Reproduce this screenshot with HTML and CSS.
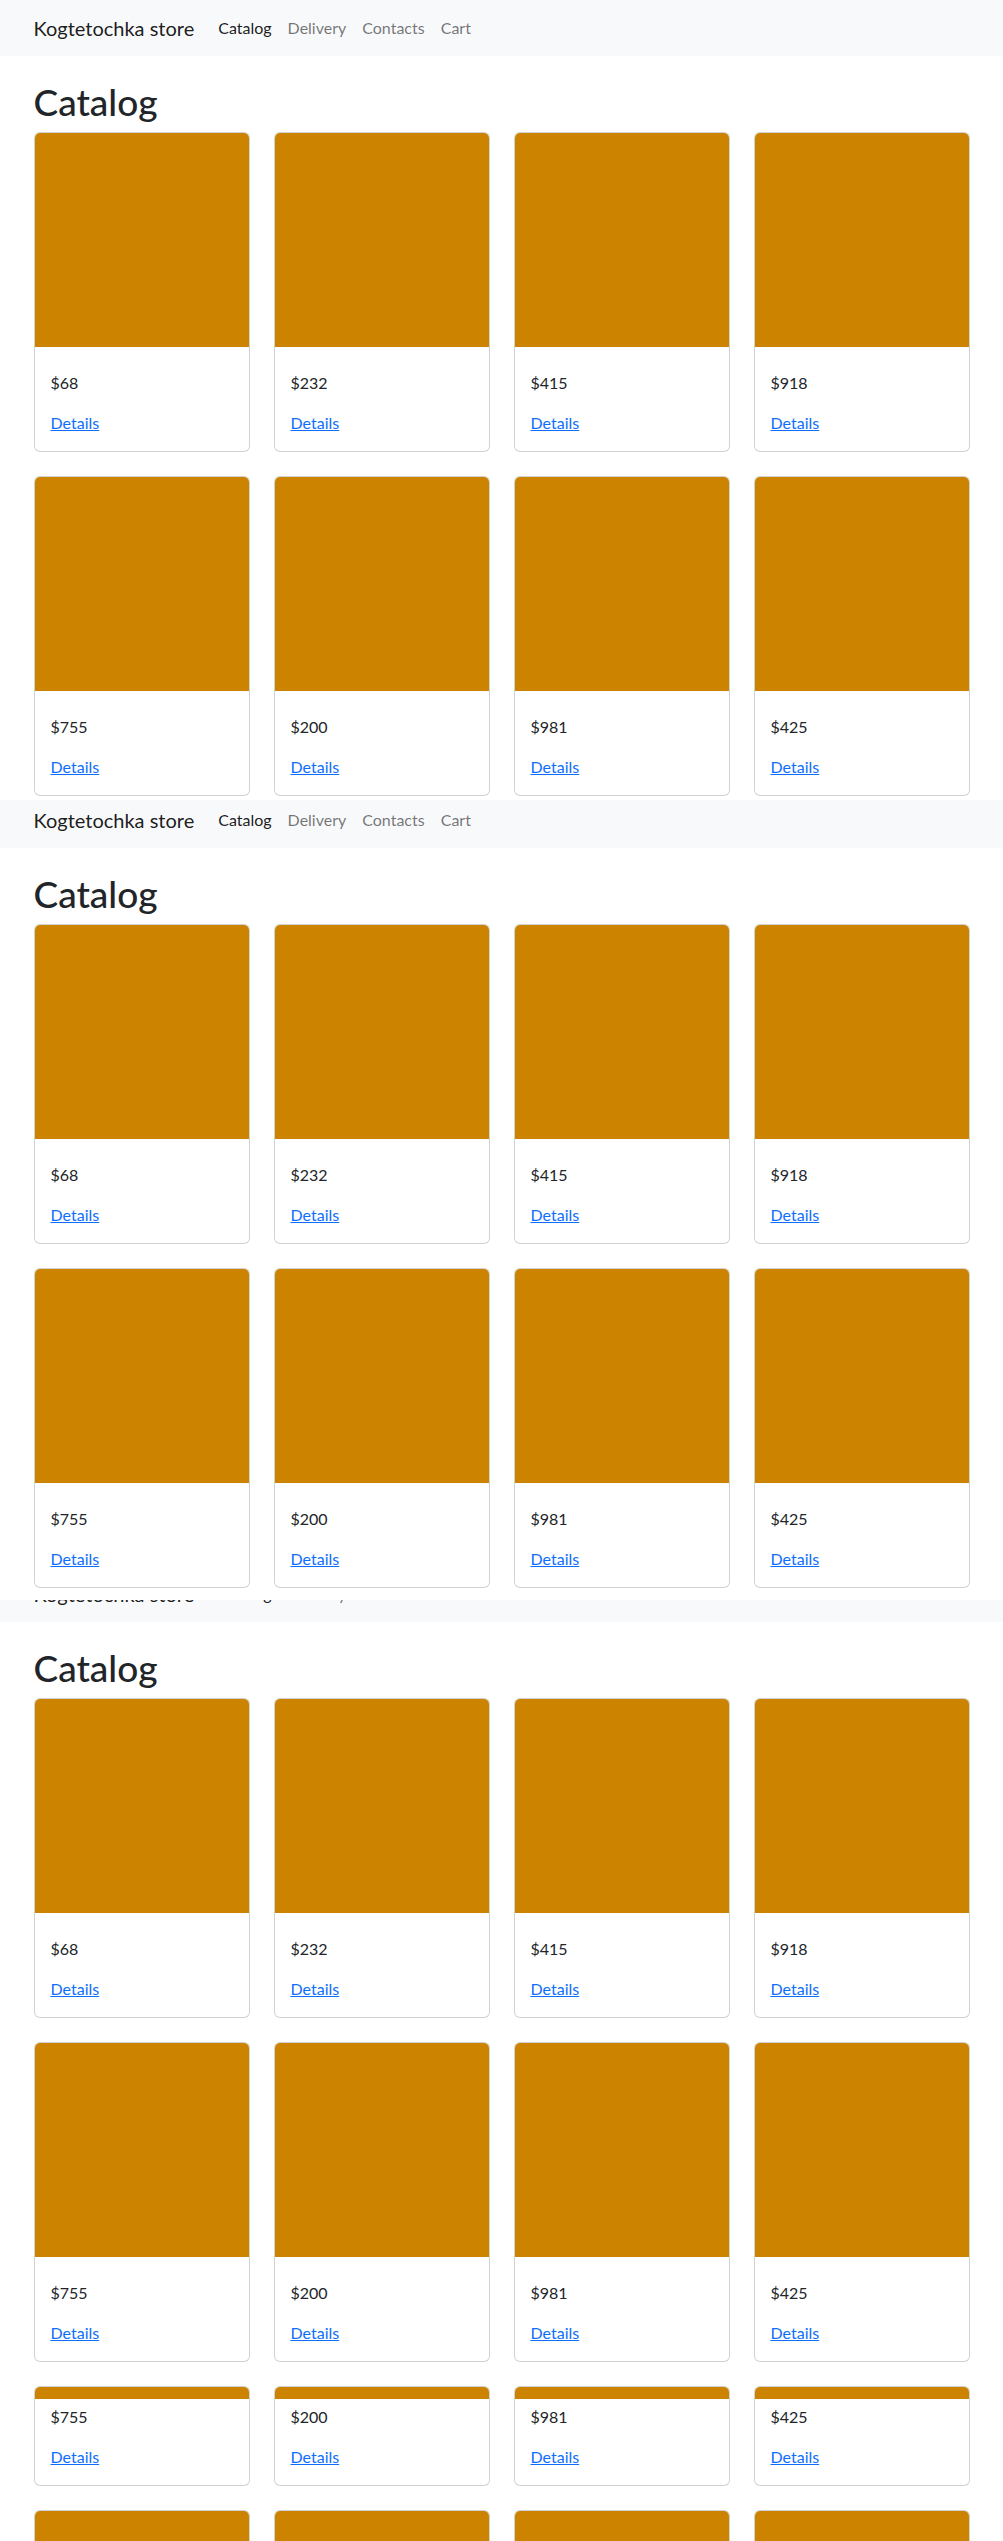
FILE: index.html
```html
<!DOCTYPE html>
<html lang="en">
<head>
<meta charset="utf-8">
<title>Kogtetochka store</title>
<link rel="stylesheet" href="styles.css">
</head>
<body>

<!-- capture 1 -->
<div class="shot shot-a">
  <div class="page">
    <nav class="navbar">
      <div class="container nav-inner">
        <a class="brand" href="#">Kogtetochka store</a>
        <ul class="nav">
          <li><a class="nav-link active" href="#">Catalog</a></li>
          <li><a class="nav-link" href="#">Delivery</a></li>
          <li><a class="nav-link" href="#">Contacts</a></li>
          <li><a class="nav-link" href="#">Cart</a></li>
        </ul>
      </div>
    </nav>
    <main class="container main">
      <h1 class="heading">Catalog</h1>
      <div class="grid">
        <div class="card"><div class="card-img"></div><div class="card-body"><h5 class="card-title"></h5><p class="price">$68</p><a class="details" href="#">Details</a></div></div>
        <div class="card"><div class="card-img"></div><div class="card-body"><h5 class="card-title"></h5><p class="price">$232</p><a class="details" href="#">Details</a></div></div>
        <div class="card"><div class="card-img"></div><div class="card-body"><h5 class="card-title"></h5><p class="price">$415</p><a class="details" href="#">Details</a></div></div>
        <div class="card"><div class="card-img"></div><div class="card-body"><h5 class="card-title"></h5><p class="price">$918</p><a class="details" href="#">Details</a></div></div>
        <div class="card"><div class="card-img"></div><div class="card-body"><h5 class="card-title"></h5><p class="price">$755</p><a class="details" href="#">Details</a></div></div>
        <div class="card"><div class="card-img"></div><div class="card-body"><h5 class="card-title"></h5><p class="price">$200</p><a class="details" href="#">Details</a></div></div>
        <div class="card"><div class="card-img"></div><div class="card-body"><h5 class="card-title"></h5><p class="price">$981</p><a class="details" href="#">Details</a></div></div>
        <div class="card"><div class="card-img"></div><div class="card-body"><h5 class="card-title"></h5><p class="price">$425</p><a class="details" href="#">Details</a></div></div>
      </div>
    </main>
  </div>
</div>

<!-- capture 2 -->
<div class="shot shot-b">
  <div class="page">
    <nav class="navbar">
      <div class="container nav-inner">
        <a class="brand" href="#">Kogtetochka store</a>
        <ul class="nav">
          <li><a class="nav-link active" href="#">Catalog</a></li>
          <li><a class="nav-link" href="#">Delivery</a></li>
          <li><a class="nav-link" href="#">Contacts</a></li>
          <li><a class="nav-link" href="#">Cart</a></li>
        </ul>
      </div>
    </nav>
    <main class="container main">
      <h1 class="heading">Catalog</h1>
      <div class="grid">
        <div class="card"><div class="card-img"></div><div class="card-body"><h5 class="card-title"></h5><p class="price">$68</p><a class="details" href="#">Details</a></div></div>
        <div class="card"><div class="card-img"></div><div class="card-body"><h5 class="card-title"></h5><p class="price">$232</p><a class="details" href="#">Details</a></div></div>
        <div class="card"><div class="card-img"></div><div class="card-body"><h5 class="card-title"></h5><p class="price">$415</p><a class="details" href="#">Details</a></div></div>
        <div class="card"><div class="card-img"></div><div class="card-body"><h5 class="card-title"></h5><p class="price">$918</p><a class="details" href="#">Details</a></div></div>
        <div class="card"><div class="card-img"></div><div class="card-body"><h5 class="card-title"></h5><p class="price">$755</p><a class="details" href="#">Details</a></div></div>
        <div class="card"><div class="card-img"></div><div class="card-body"><h5 class="card-title"></h5><p class="price">$200</p><a class="details" href="#">Details</a></div></div>
        <div class="card"><div class="card-img"></div><div class="card-body"><h5 class="card-title"></h5><p class="price">$981</p><a class="details" href="#">Details</a></div></div>
        <div class="card"><div class="card-img"></div><div class="card-body"><h5 class="card-title"></h5><p class="price">$425</p><a class="details" href="#">Details</a></div></div>
      </div>
    </main>
  </div>
</div>

<!-- capture 3 -->
<div class="shot shot-c">
  <div class="page">
    <nav class="navbar">
      <div class="container nav-inner">
        <a class="brand" href="#">Kogtetochka store</a>
        <ul class="nav">
          <li><a class="nav-link active" href="#">Catalog</a></li>
          <li><a class="nav-link" href="#">Delivery</a></li>
          <li><a class="nav-link" href="#">Contacts</a></li>
          <li><a class="nav-link" href="#">Cart</a></li>
        </ul>
      </div>
    </nav>
    <main class="container main">
      <h1 class="heading">Catalog</h1>
      <div class="grid">
        <div class="card"><div class="card-img"></div><div class="card-body"><h5 class="card-title"></h5><p class="price">$68</p><a class="details" href="#">Details</a></div></div>
        <div class="card"><div class="card-img"></div><div class="card-body"><h5 class="card-title"></h5><p class="price">$232</p><a class="details" href="#">Details</a></div></div>
        <div class="card"><div class="card-img"></div><div class="card-body"><h5 class="card-title"></h5><p class="price">$415</p><a class="details" href="#">Details</a></div></div>
        <div class="card"><div class="card-img"></div><div class="card-body"><h5 class="card-title"></h5><p class="price">$918</p><a class="details" href="#">Details</a></div></div>
        <div class="card"><div class="card-img"></div><div class="card-body"><h5 class="card-title"></h5><p class="price">$755</p><a class="details" href="#">Details</a></div></div>
        <div class="card"><div class="card-img"></div><div class="card-body"><h5 class="card-title"></h5><p class="price">$200</p><a class="details" href="#">Details</a></div></div>
        <div class="card"><div class="card-img"></div><div class="card-body"><h5 class="card-title"></h5><p class="price">$981</p><a class="details" href="#">Details</a></div></div>
        <div class="card"><div class="card-img"></div><div class="card-body"><h5 class="card-title"></h5><p class="price">$425</p><a class="details" href="#">Details</a></div></div>

        <div class="card"><div class="card-img short"></div><div class="card-body tight"><p class="price">$755</p><a class="details" href="#">Details</a></div></div>
        <div class="card"><div class="card-img short"></div><div class="card-body tight"><p class="price">$200</p><a class="details" href="#">Details</a></div></div>
        <div class="card"><div class="card-img short"></div><div class="card-body tight"><p class="price">$981</p><a class="details" href="#">Details</a></div></div>
        <div class="card"><div class="card-img short"></div><div class="card-body tight"><p class="price">$425</p><a class="details" href="#">Details</a></div></div>

        <div class="card"><div class="card-img"></div><div class="card-body"><h5 class="card-title"></h5><p class="price">$68</p><a class="details" href="#">Details</a></div></div>
        <div class="card"><div class="card-img"></div><div class="card-body"><h5 class="card-title"></h5><p class="price">$232</p><a class="details" href="#">Details</a></div></div>
        <div class="card"><div class="card-img"></div><div class="card-body"><h5 class="card-title"></h5><p class="price">$415</p><a class="details" href="#">Details</a></div></div>
        <div class="card"><div class="card-img"></div><div class="card-body"><h5 class="card-title"></h5><p class="price">$918</p><a class="details" href="#">Details</a></div></div>
      </div>
    </main>
  </div>
</div>

</body>
</html>
```

FILE: styles.css
```css
* {
  box-sizing: border-box;
}

html, body {
  margin: 0;
  padding: 0;
}

body {
  font-family: Lato, "Noto Sans", "Liberation Sans", sans-serif;
  font-size: 16px;
  line-height: 1.5;
  color: #212529;
  background: #fff;
}

/* stitched captures */
.shot {
  overflow: hidden;
}
.shot-a {
  height: 800px;
}
.shot-b {
  height: 800px;
}
.shot-b .page {
  margin-top: -8px;
}
.shot-c {
  height: 941px;
}
.shot-c .page {
  margin-top: -34px;
}

.container {
  width: 100%;
  max-width: 960px;
  margin: 0 auto;
  padding: 0 12px;
}

/* navbar */
.navbar {
  background: #f8f9fa;
  padding: 8px 0;
}
.nav-inner {
  display: flex;
  align-items: center;
}
.brand {
  font-size: 20px;
  line-height: 30px;
  padding: 5px 0;
  margin-right: 16px;
  color: rgba(0, 0, 0, 0.9);
  text-decoration: none;
  white-space: nowrap;
}
.nav {
  display: flex;
  list-style: none;
  margin: 0;
  padding: 0;
}
.nav-link {
  display: block;
  padding: 8px;
  line-height: 24px;
  color: rgba(0, 0, 0, 0.55);
  text-decoration: none;
}
.nav-link.active {
  color: rgba(0, 0, 0, 0.9);
}

/* main */
.main {
  margin-top: 24px;
}
.heading {
  font-size: 37.05px;
  font-weight: 500;
  line-height: 1.2;
  margin: 0 0 8px;
}

.grid {
  display: grid;
  grid-template-columns: repeat(4, 1fr);
  gap: 24px;
}

.card {
  border: 1px solid rgba(0, 0, 0, 0.175);
  border-radius: 6px;
  overflow: hidden;
  background: #fff;
}
.card-img {
  height: 214px;
  background: #cc8400;
}
.card-img.short {
  height: 12px;
}
.card-body {
  padding: 16px;
}
.card-body.tight {
  padding-top: 6px;
}
.card-title {
  margin: 0 0 8px;
  height: 0;
}
.price {
  margin: 0 0 16px;
}
.details {
  color: #0d6efd;
  text-decoration: underline;
}
```
